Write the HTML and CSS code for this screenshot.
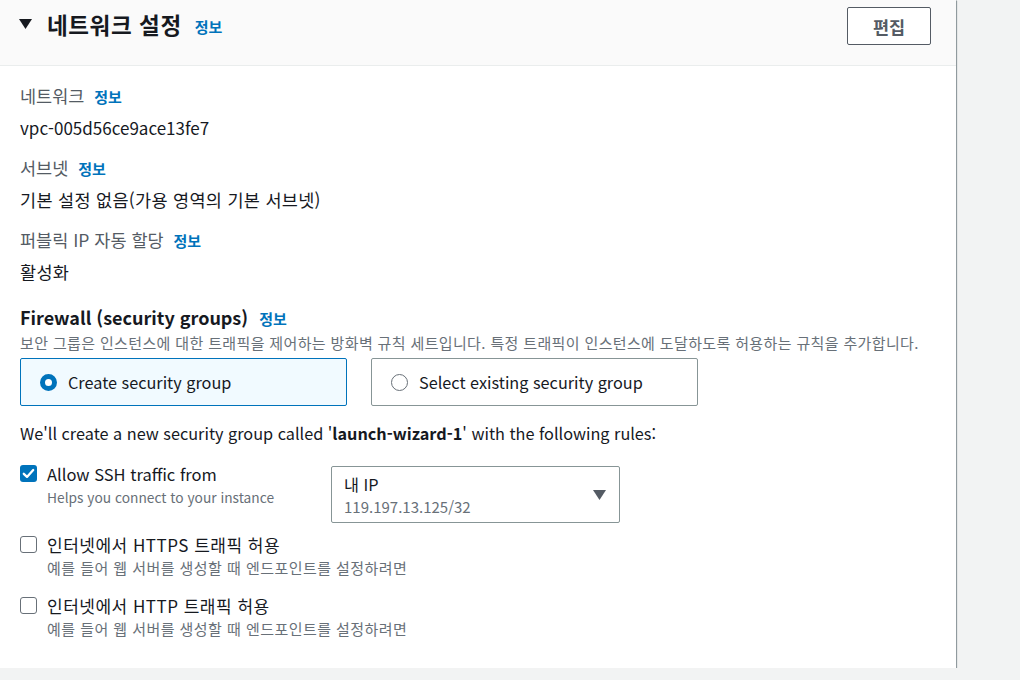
FILE: index.html
```html
<!DOCTYPE html>
<html lang="ko">
<head>
<meta charset="utf-8">
<link rel="stylesheet" href="styles.css">
</head>
<body>
<div class="card">
  <div class="card-header">
    <div class="title-row">
      <svg class="caret" width="13" height="10" viewBox="0 0 13 10"><path d="M0 0 H13 L6.5 10 Z" fill="#16191f"/></svg>
      <h2 class="title">네트워크 설정</h2>
      <a class="info">정보</a>
    </div>
    <button class="btn">편집</button>
  </div>
  <div class="card-body">
    <div class="field">
      <div class="label">네트워크 <a class="info">정보</a></div>
      <div class="value latin">vpc-005d56ce9ace13fe7</div>
    </div>
    <div class="field">
      <div class="label">서브넷 <a class="info">정보</a></div>
      <div class="value">기본 설정 없음(가용 영역의 기본 서브넷)</div>
    </div>
    <div class="field">
      <div class="label">퍼블릭 IP 자동 할당 <a class="info">정보</a></div>
      <div class="value">활성화</div>
    </div>

    <div class="fw-title">Firewall (security groups) <a class="info">정보</a></div>
    <div class="fw-desc">보안 그룹은 인스턴스에 대한 트래픽을 제어하는 방화벽 규칙 세트입니다. 특정 트래픽이 인스턴스에 도달하도록 허용하는 규칙을 추가합니다.</div>

    <div class="tiles">
      <div class="tile selected">
        <span class="radio checked"></span>
        <span>Create security group</span>
      </div>
      <div class="tile">
        <span class="radio"></span>
        <span>Select existing security group</span>
      </div>
    </div>

    <div class="notice">We'll create a new security group called '<b>launch-wizard-1</b>' with the following rules:</div>

    <div class="rule ssh">
      <div class="check-col">
        <span class="checkbox checked">
          <svg width="17" height="17" viewBox="0 0 17 17"><path d="M3.8 8.8 L7 11.9 L13.2 5" fill="none" stroke="#fff" stroke-width="2.3" stroke-linecap="round" stroke-linejoin="round"/></svg>
        </span>
        <div class="check-text">
          <div class="check-label latin">Allow SSH traffic from</div>
          <div class="check-desc latin">Helps you connect to your instance</div>
        </div>
      </div>
      <div class="select">
        <div class="select-text">
          <div class="select-main">내 IP</div>
          <div class="select-sub">119.197.13.125/32</div>
        </div>
        <svg class="select-caret" width="13" height="10" viewBox="0 0 13 10"><path d="M0 0 H13 L6.5 10 Z" fill="#545b64"/></svg>
      </div>
    </div>

    <div class="rule">
      <div class="check-col">
        <span class="checkbox"></span>
        <div class="check-text">
          <div class="check-label">인터넷에서 HTTPS 트래픽 허용</div>
          <div class="check-desc">예를 들어 웹 서버를 생성할 때 엔드포인트를 설정하려면</div>
        </div>
      </div>
    </div>

    <div class="rule">
      <div class="check-col">
        <span class="checkbox"></span>
        <div class="check-text">
          <div class="check-label">인터넷에서 HTTP 트래픽 허용</div>
          <div class="check-desc">예를 들어 웹 서버를 생성할 때 엔드포인트를 설정하려면</div>
        </div>
      </div>
    </div>
  </div>
</div>
</body>
</html>
```

FILE: styles.css
```css
* { box-sizing: border-box; }
html, body {
  margin: 0;
  padding: 0;
  background: #f2f3f3;
  font-family: "Noto Sans CJK KR", "Noto Sans", sans-serif;
  color: #16191f;
}
.card {
  width: 956px;
  background: #fff;
  box-shadow: 1px 1px 1px rgba(0, 28, 36, 0.3), 1px 0 0 rgba(0, 28, 36, 0.15);
}
.card-header {
  height: 66px;
  background: #fafafa;
  border-bottom: 1px solid #eaeded;
  display: flex;
  justify-content: space-between;
  align-items: flex-start;
  padding: 7px 25px 0 19px;
}
.title-row {
  display: flex;
  align-items: center;
  height: 34px;
}
.caret { margin: 0 15px 0 0; }
.title {
  margin: 0;
  font-size: 22.5px;
  font-weight: 700;
  line-height: 28px;
  letter-spacing: 0.6px;
  color: #16191f;
}
.info {
  color: #0073bb;
  font-size: 15px;
  font-weight: 700;
  margin-left: 6px;
  letter-spacing: 0;
  cursor: pointer;
}
.title-row .info { margin-left: 13px; margin-top: 4px; }
.btn {
  width: 84px;
  height: 38px;
  background: #fff;
  border: 1px solid #545b64;
  border-radius: 2px;
  font-family: inherit;
  font-size: 17.5px;
  font-weight: 700;
  color: #545b64;
  padding: 0;
}
.card-body {
  padding: 19px 20px 30px 20px;
}
.field { margin-bottom: 18px; }
.label {
  font-size: 17.5px;
  line-height: 22px;
  color: #545b64;
  margin-bottom: 9px;
}
.label .info { margin-left: 5px; }
.value {
  font-size: 17.5px;
  line-height: 22px;
  letter-spacing: 0.3px;
  color: #16191f;
}
.value.latin { font-size: 17px; letter-spacing: 0; }
.fw-title {
  margin-top: 22px;
  font-size: 18px;
  font-weight: 700;
  line-height: 24px;
}
.fw-title .info { margin-left: 6px; }
.fw-desc {
  font-size: 15px;
  line-height: 20px;
  letter-spacing: 0.36px;
  color: #687078;
  margin-top: 2px;
  white-space: nowrap;
}
.tiles {
  display: flex;
  gap: 24px;
  margin-top: 5px;
}
.tile {
  width: 327px;
  height: 48px;
  border: 1px solid #879596;
  border-radius: 2px;
  display: flex;
  align-items: center;
  padding-left: 19px;
  font-size: 16.25px;
  gap: 11px;
}
.tile.selected {
  background: #f1faff;
  border-color: #0073bb;
}
.radio {
  width: 17px;
  height: 17px;
  border-radius: 50%;
  border: 1.5px solid #687078;
  background: #fff;
  flex: none;
}
.radio.checked {
  border: 5px solid #0073bb;
}
.notice {
  margin-top: 16px;
  font-size: 16.25px;
  line-height: 22px;
}
.notice b { font-weight: 700; }
.rule {
  display: flex;
  align-items: flex-start;
  margin-top: 20px;
}
.rule.ssh { margin-top: 21px; }
.check-col {
  display: flex;
  align-items: flex-start;
  width: 311px;
  gap: 10px;
}
.checkbox {
  width: 17px;
  height: 17px;
  margin-top: 0;
  border: 1.5px solid #687078;
  border-radius: 3px;
  flex: none;
  display: flex;
  align-items: center;
  justify-content: center;
}
.checkbox.checked {
  background: #0073bb;
  border: none;
}
.check-label {
  font-size: 17px;
  line-height: 18px;
  letter-spacing: 0.5px;
  white-space: nowrap;
}
.check-label.latin { font-size: 16.5px; letter-spacing: 0; }
.check-desc {
  margin-top: 5px;
  font-size: 15px;
  line-height: 18px;
  letter-spacing: 0.45px;
  color: #687078;
  white-space: nowrap;
}
.check-desc.latin { font-size: 13.75px; letter-spacing: 0; }
.rule.ssh + .rule { margin-top: 13px; }
.select {
  width: 289px;
  height: 57px;
  border: 1px solid #879596;
  border-radius: 2px;
  margin-top: 1px;
  display: flex;
  align-items: center;
  justify-content: space-between;
  padding: 0 13px 0 12px;
}
.select-main {
  font-size: 16.25px;
  line-height: 20px;
}
.select-sub {
  font-size: 15px;
  line-height: 18px;
  color: #687078;
  margin-top: 4px;
}
.select-caret { margin-top: 0; }
```
